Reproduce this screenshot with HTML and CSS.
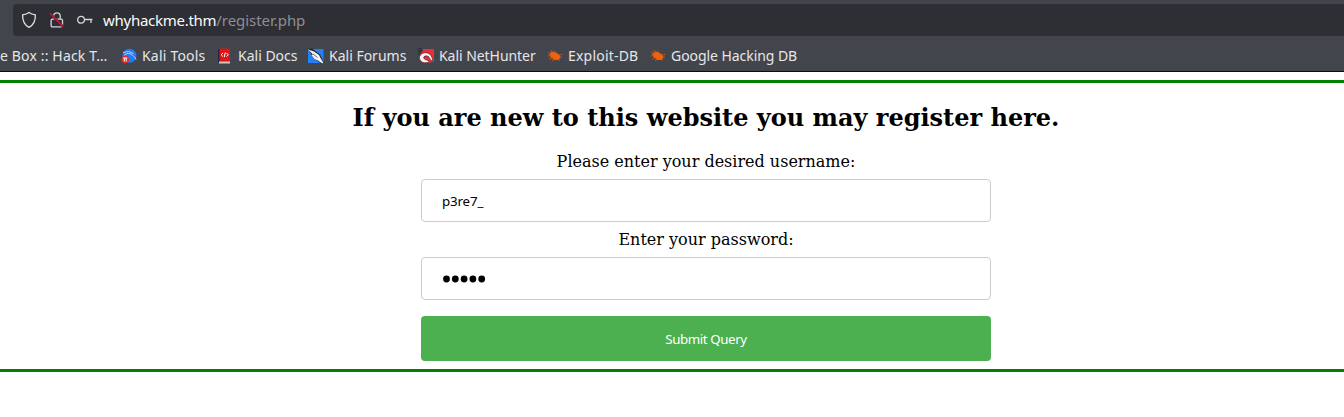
FILE: index.html
```
<!DOCTYPE html>
<html lang="en">
<head>
<meta charset="utf-8">
<title>Register</title>
<link rel="stylesheet" href="styles.css">
</head>
<body>
<header class="chrome">
  <div class="urlbar">
    <svg class="shield" width="16" height="18" viewBox="0 0 16 18"><path d="M8 1.4 C6 2.9 4 3.5 1.6 3.9 C1.5 9.6 3.2 13.8 8 16.3 C12.8 13.8 14.5 9.6 14.4 3.9 C12 3.5 10 2.9 8 1.4Z" fill="none" stroke="#e0e0e2" stroke-width="1.3" stroke-linejoin="round"/></svg>
    <svg class="lock" width="16" height="18" viewBox="0 0 16 18"><path d="M4.600 8V5.100a3.300 3.300 0 0 1 6.600 0V8M4 8.100h8.200q1.300 0 1.300 1.300v5.100q0 1.300-1.300 1.300H3.400q-1.300 0-1.300-1.300V9.400q0-1.300 1.300-1.300z" fill="none" stroke="#d5d5d8" stroke-width="1.300"/><path d="M1 2.300L14 15.600" stroke="#2e2f34" stroke-width="2.400"/><path d="M1 2.300L14 15.600" stroke="#e3103f" stroke-width="1.400"/></svg>
    <svg class="key" width="18" height="12" viewBox="0 0 18 12"><circle cx="5" cy="5.800" r="3.400" fill="none" stroke="#d5d5d8" stroke-width="1.300"/><path d="M8.400 5.500H16.400M15 5.500V9" fill="none" stroke="#d5d5d8" stroke-width="1.300"/></svg>
    <span class="address"><span class="host">whyhackme.thm</span><span class="path">/register.php</span></span>
  </div>
  <nav class="bookmarks">
    <span class="mark cut">e Box :: Hack T…</span>
    <span class="mark tools"><svg width="16" height="16" viewBox="0 0 16 16"><circle cx="8.500" cy="7.800" r="7" fill="#2479f5"/><path d="M2 4.500Q8 2 12.500 5.500M3 7.200Q8 3.500 12 7.500Q14 9 15 11.500" fill="none" stroke="#b4d0f8" stroke-width="1"/><circle cx="4.200" cy="11.500" r="3.800" fill="#e32b2b"/><path d="M2.200 10h4M3.300 10v3.500M5.200 10v3.500" stroke="#fff" stroke-width="1"/></svg>Kali Tools</span>
    <span class="mark docs"><svg width="16" height="16" viewBox="0 0 16 16"><path d="M1 1h2v13H1z" fill="#20284b"/><path d="M2.500.500H13v13H2.500z" fill="#dc1717"/><path d="M2 13.500h11v2H2z" fill="#d0c7c5"/><path d="M6 5L4.200 6.800l1.800 1.800M9.500 5l1.800 1.800-1.800 1.800M8.300 4.500L7.300 9.100" fill="none" stroke="#fff" stroke-width="1"/></svg>Kali Docs</span>
    <span class="mark forums"><svg width="16" height="16" viewBox="0 0 16 16"><path d="M0 1h15.500v14H0z" fill="#267ff5"/><path d="M0 1L4 .500 12 6.500l4 8.500-2 1-6-4-5-6z" fill="#24262b"/><path d="M0 1.500L6 3.500l5 3.500 1.500 3 2.800 4.800-1 .700L10 12.500 6.500 11 3.500 7 5 6.500z" fill="#f3f3f3"/><path d="M5 6L9.500 9.500" stroke="#383a40" stroke-width=".700"/></svg>Kali Forums</span>
    <span class="mark hunter"><svg width="16" height="16" viewBox="0 0 16 16"><path d="M1 1h15v12.500L11 15H4z" fill="#ed2d36"/><path d="M0 0h3.500L5 3 2 6 0 7z" fill="#35363c"/><path d="M1.500 8.500Q3.500 4.500 8 4.700Q12.500 5 14 9.700L15 13 13 12.500 10.500 8.500Q8 7 6 8.600Q4.500 11.500 10.500 12.500L11 14Q5.500 16 2.500 12.800Q1 11 1.500 8.500z" fill="#f3f3f3" stroke="#29282d" stroke-width=".600"/></svg>Kali NetHunter</span>
    <span class="mark exploit"><svg width="16" height="16" viewBox="0 0 16 16"><path d="M2 6L5 3.500l4 1L12.500 7l1 2.500-1.500 1.500 1 1.500-3-.800-2.500.500L3.500 9z" fill="#f0610c"/><path d="M1 4L4 6M4 2L5.500 5M7.500 2.500L8 5M.500 8L4 7.500M2 11.300L6 9.500M5 13l3-2.500M12 7l3.500-.500M13 9l2 .300" stroke="#bf5722" stroke-width=".900"/></svg>Exploit-DB</span>
    <span class="mark google"><svg width="16" height="16" viewBox="0 0 16 16"><path d="M2 6L5 3.500l4 1L12.500 7l1 2.500-1.500 1.500 1 1.500-3-.800-2.500.500L3.500 9z" fill="#f0610c"/><path d="M1 4L4 6M4 2L5.500 5M7.500 2.500L8 5M.500 8L4 7.500M2 11.300L6 9.500M5 13l3-2.500M12 7l3.500-.500M13 9l2 .300" stroke="#bf5722" stroke-width=".900"/></svg>Google Hacking DB</span>
  </nav>
</header>
<main class="panel">
  <h2>If you are new to this website you may register here.</h2>
  <form class="form">
    <label class="label" for="user">Please enter your desired username:</label>
    <input class="field" id="user" type="text" value="p3re7_">
    <label class="label">Enter your password:</label>
    <div class="field dots"><svg width="44" height="8" viewBox="0 0 44 8"><circle cx="4.500" cy="4" r="3.400"/><circle cx="13.300" cy="4" r="3.400"/><circle cx="22.100" cy="4" r="3.400"/><circle cx="30.900" cy="4" r="3.400"/><circle cx="39.700" cy="4" r="3.400"/></svg></div>
    <button class="submit" type="button">Submit Query</button>
  </form>
</main>
</body>
</html>
```
FILE: styles.css
```
* { box-sizing: border-box; }
body { margin: 0; background: #fff; color: #000; font-family: "DejaVu Serif", serif; overflow: hidden; }
.chrome { height: 72px; padding: 4px 0 0; background: #43454c; border-bottom: 1px solid #0c0c12; font-family: "Noto Sans", sans-serif; }
.urlbar { display: flex; align-items: center; height: 32px; margin-left: 13px; padding-left: 8px; background: #2e2f34; border-radius: 4px 0 0 4px; }
.lock { margin-left: 12px; }
.key { margin-left: 11px; }
.address { margin-left: 9px; font-size: 15px; line-height: 32px; color: #fbfbfe; white-space: nowrap; }
.host { letter-spacing: -.27px; }
.path { color: #8d8e93; letter-spacing: -.05px; }
.bookmarks { display: flex; align-items: center; height: 31px; margin-top: 4px; color: #e6e6e8; font-size: 14px; white-space: nowrap; }
.mark { display: flex; align-items: center; flex: none; gap: 5px; }
.cut { width: 121px; letter-spacing: .15px; }
.tools { width: 96px; letter-spacing: .2px; }
.docs { width: 91px; }
.forums { width: 110px; }
.hunter { width: 129px; letter-spacing: -.05px; }
.exploit { width: 103px; letter-spacing: .2px; }
.google { letter-spacing: -.06px; }
.panel { height: 292px; margin-top: 8px; padding-left: 68px; border: solid #008000; border-width: 3px 0; text-align: center; }
h2 { margin: 21px 0 20px; font-size: 24px; line-height: 28px; white-space: nowrap; }
.form { display: flex; flex-direction: column; width: 570px; margin: 0 auto; }
.label { font-size: 16px; line-height: 19px; }
.field { height: 43px; margin: 8px 0; padding: 0 20px; border: 1px solid #ccc; border-radius: 4px; background: #fff; color: #000; font: 13.333px "Noto Sans", sans-serif; letter-spacing: -.15px; }
.dots { display: flex; align-items: center; padding-top: 1px; }
.submit { height: 45px; margin-top: 8px; border: 0; border-radius: 4px; background: #4caf50; color: #fff; font: 13.333px "Noto Sans", sans-serif; letter-spacing: -.42px; }
```
